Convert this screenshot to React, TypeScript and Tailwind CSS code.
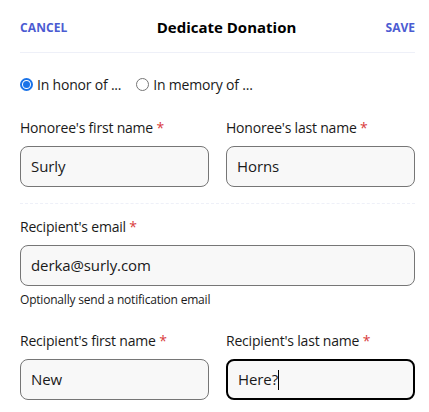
import React from "react";

function Req() {
  return <span className="text-[#d93c3c]"> *</span>;
}

function Field({ label, value, focused }: { label: string; value: string; focused?: boolean }) {
  return (
    <div className="flex flex-col">
      <div className="text-[14px] tracking-[-0.2px] leading-[20px] text-[#1a1a1a] h-[20px]">
        {label}
        <Req />
      </div>
      <div
        className={
          "mt-[8px] h-[41px] rounded-[8px] bg-[#f8f8f8] flex items-center px-[10px] text-[15px] tracking-[-0.1px] text-[#1a1a1a] " +
          (focused ? "border-2 border-black px-[9px]" : "border border-[#767676]")
        }
      >
        <span>{value}</span>
        {focused && <span className="inline-block w-[1px] h-[20px] bg-black" />}
      </div>
    </div>
  );
}

export default function App() {
  return (
    <div
      className="w-[429px] h-[412px] bg-white pl-[20px] pr-[14px] overflow-hidden"
      style={{ fontFamily: '"Open Sans", "Noto Sans", sans-serif' }}
    >
      <div className="flex items-center justify-between h-[53px] pt-[3px] border-b border-[#eef0f8]">
        <span className="text-[12px] font-bold text-[#4b5bd2] tracking-[0.1px]">CANCEL</span>
        <span className="text-[15px] font-bold text-black">Dedicate Donation</span>
        <span className="text-[12px] font-bold text-[#4b5bd2]">SAVE</span>
      </div>
      <div className="flex items-center h-[62px] text-[14px] tracking-[-0.2px] text-[#1a1a1a]">
        <label className="flex items-center">
          <span className="w-[13px] h-[13px] rounded-full border-2 border-[#1a73e8] flex items-center justify-center">
            <span className="w-[7px] h-[7px] rounded-full bg-[#1a73e8]" />
          </span>
          <span className="ml-[4px]">In honor of ...</span>
        </label>
        <label className="flex items-center ml-[15px]">
          <span className="w-[13px] h-[13px] rounded-full border border-[#767676]" />
          <span className="ml-[4px]">In memory of ...</span>
        </label>
      </div>
      <div className="grid grid-cols-2 gap-x-[17px] pt-[3px] pb-[16px] border-b border-dashed border-[#eef0f8]">
        <Field label="Honoree's first name" value="Surly" />
        <Field label="Honoree's last name" value="Horns" />
      </div>
      <div className="pt-[13px]">
        <Field label="Recipient's email" value="derka@surly.com" />
        <div className="text-[12px] tracking-[-0.2px] text-[#1a1a1a] mt-[5px]">Optionally send a notification email</div>
      </div>
      <div className="grid grid-cols-2 gap-x-[17px] pt-[22px]">
        <Field label="Recipient's first name" value="New" />
        <Field label="Recipient's last name" value="Here?" focused />
      </div>
    </div>
  );
}
